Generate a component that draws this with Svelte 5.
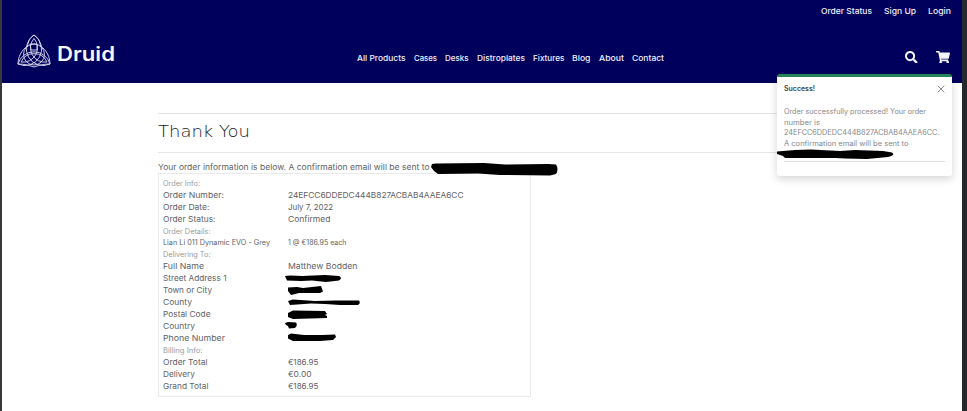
<script>
  const account = [['Order Status', 51], ['Sign Up', 32], ['Login', 23]];
  const links = [
    ['All Products', 48.5], ['Cases', 23], ['Desks', 23.5], ['Distroplates', 48],
    ['Fixtures', 31.5], ['Blog', 18.5], ['About', 25], ['Contact', 32]
  ];
  const rows = [
    { head: 'Order Info:', w: 37, h: 11 },
    { label: 'Order Number:', w: 61, value: '24EFCC6DDEDC444B827ACBAB4AAEA6CC', vw: 175.5 },
    { label: 'Order Date:', w: 46.5, value: 'July 7, 2022', vw: 45 },
    { label: 'Order Status:', w: 52.5, value: 'Confirmed', vw: 42.5 },
    { head: 'Order Details:', w: 47.5, h: 12 },
    { label: 'Lian Li 011 Dynamic EVO - Grey', w: 107, value: '1 @ €186.95 each', vw: 58.5, small: true },
    { head: 'Delivering To:', w: 47.5, h: 11 },
    { label: 'Full Name', w: 41, value: 'Matthew Bodden', vw: 69.5 },
    { label: 'Street Address 1', w: 63.5 },
    { label: 'Town or City', w: 49 },
    { label: 'County', w: 29 },
    { label: 'Postal Code', w: 47.5 },
    { label: 'Country', w: 32 },
    { label: 'Phone Number', w: 62 },
    { head: 'Billing Info:', w: 39.5, h: 12 },
    { label: 'Order Total', w: 44.5, value: '€186.95', vw: 30.5 },
    { label: 'Delivery', w: 32, value: '€0.00', vw: 23.5 },
    { label: 'Grand Total', w: 45.5, value: '€186.95', vw: 30.5 }
  ];
  const message = [
    ['Order successfully processed! Your order', 142], ['number is', 36],
    ['24EFCC6DDEDC444B827ACBAB4AAEA6CC.', 155.5], ['A confirmation email will be sent to', 124.5]
  ];

  // Widens a label horizontally so that it spans the given width.
  function fit(node, width) {
    const natural = node.getBoundingClientRect().width;
    node.style.width = `${width}px`;
    node.style.transform = `scaleX(${width / natural})`;
  }
</script>

<div class="page">
  <header>
    <div class="account">
      {#each account as [t, w]}<a href="#top"><span use:fit={w}>{t}</span></a>{/each}
    </div>
    <div class="bar">
      <div class="brand">
        <svg class="logo" width="34" height="34" viewBox="0 0 34 34" fill="none" stroke="#d4d4ea" stroke-width=".95">
          <path d="M17 1A16.600 16.600 0 0 1 1 30A16.600 16.600 0 0 1 33 30A16.600 16.600 0 0 1 17 1Z" />
          <path d="M17 1C12.500 4 11 8 10.500 12C4.500 16 1 23 1 30C7 30 11 31 17 33C23 31 27 30 33 30C33 23 29.500 16 23.500 12C23 8 21.500 4 17 1Z" />
          <path d="M17 4.500A14.300 14.300 0 0 1 4 28A14.300 14.300 0 0 1 30 28A14.300 14.300 0 0 1 17 4.500Z" />
          <circle cx="17" cy="20.500" r="10.500" />
          <path d="M13 10H20V16H14Z" />
        </svg>
        <span class="name"><span use:fit={58}>Druid</span></span>
      </div>
      <nav>
        {#each links as [t, w]}<a href="#top"><span use:fit={w}>{t}</span></a>{/each}
      </nav>
      <div class="tools">
        <svg width="12.5" height="12.5" viewBox="0 0 512 512" fill="#f4f5fb"><path d="M505 442.700L405.300 343c-4.500-4.500-10.600-7-17-7H372c27.600-35.300 44-79.700 44-128C416 93.100 322.900 0 208 0S0 93.100 0 208s93.100 208 208 208c48.300 0 92.700-16.400 128-44v16.300c0 6.400 2.500 12.500 7 17l99.700 99.700c9.400 9.400 24.600 9.400 33.900 0l28.300-28.300c9.400-9.400 9.400-24.600.1-34zM208 336c-70.700 0-128-57.200-128-128 0-70.700 57.200-128 128-128 70.700 0 128 57.200 128 128 0 70.700-57.200 128-128 128z" /></svg>
        <svg width="14" height="12.500" viewBox="0 0 576 512" fill="#f4f5fb"><path d="M528.100 301.300l47.300-208C578.800 78.300 567.400 64 552 64H159.200l-9.200-44.800C147.800 8 137.900 0 126.500 0H24C10.700 0 0 10.700 0 24v16c0 13.300 10.700 24 24 24h69.900l70.200 343.400C147.300 417.100 136 435.200 136 456c0 30.900 25.100 56 56 56s56-25.100 56-56c0-15.700-6.400-29.800-16.800-40h209.600C430.400 426.200 424 440.300 424 456c0 30.900 25.100 56 56 56s56-25.100 56-56c0-22.200-12.900-41.300-31.600-50.400l5.500-24.300c3.400-15-8-29.300-23.400-29.300H218.100l-6.500-32h293.100c11.200 0 20.900-7.800 23.400-18.700z" /></svg>
      </div>
    </div>
  </header>

  <main>
    <h1><span use:fit={92}>Thank You</span></h1>
    <p class="intro"><span use:fit={271.500}>Your order information is below. A confirmation email will be sent to</span></p>
    <section class="order">
      {#each rows as r}
        {#if r.head}
          <div class="head" class:tall={r.h === 12}><span use:fit={r.w}>{r.head}</span></div>
        {:else}
          <div class="row" class:small={r.small}>
            <div><span use:fit={r.w}>{r.label}</span></div>
            {#if r.value}<div><span use:fit={r.vw}>{r.value}</span></div>{/if}
          </div>
        {/if}
      {/each}
    </section>
  </main>

  <aside class="toast">
    <div class="title">
      <strong><span use:fit={31}>Success!</span></strong>
      <svg width="8" height="8" viewBox="0 0 8 8" stroke="#888" stroke-width="1"><path d="M.7.7L7.300 7.300M7.300.7L.7 7.300" /></svg>
    </div>
    <div class="body">
      {#each message as [t, w]}<div><span use:fit={w}>{t}</span></div>{/each}
    </div>
  </aside>

  <svg class="ink" width="967" height="411" viewBox="0 0 967 411">
    <path d="M432 164L436 163.500L484 163L505 164.500L548 164L556 164.500Q559 169 556 174L550 175.500L500 175L478 173.500L438 174L434 171L431 167Z" />
    <path d="M777 151.500L795 150L811 149.500L840 151L855 150L883 151L892 152.500Q896 155 888 157L867 159L845 158.500L836 158L785 158L783 156L777 154Z" />
    <path d="M285 276L290 275.500L302 276L325 275L339 276Q343 278 339 280.500L326 282L312 280.500L301 281L287 280.500Z" />
    <path d="M288 287.500L297 287L303 288L321 286L323 291.500L320 293L299 293L291 295L288 291Z" />
    <path d="M288 301L293 299.500L315 301L336 300.500L359 300.500Q361 303 358 305L340 305L325 304L311 303.500L290 305Z" />
    <path d="M288 313L293 310.500L325 311L327 314L325 315L327 316V318L293 319L288 317Z" />
    <path d="M285 323L288 322L296 322.500Q298 325 295 328L289 328.500L288 326L286 325Z" />
    <path d="M288 335L291 333.500L304 335L322 335L335 334.500L336 337L333 340L320 341L293 341L288 338.500Z" />
  </svg>
</div>

<style>
  .page { position: relative; box-sizing: border-box; width: 967px; height: 411px; overflow: hidden; background: #fff; border-left: 2px solid #39393b; border-right: 5px solid #25282c; font-family: Inter, "Open Sans", sans-serif; font-size: 8px; color: #606266; }
  span { white-space: nowrap; display: inline-block; transform-origin: 0 50%; }
  a { color: #f1f1fa; text-decoration: none; font-weight: 500; }
  header { height: 83px; background: #00005c; }
  .account { height: 22px; display: flex; justify-content: flex-end; align-items: center; gap: 12px; padding-right: 11.500px; }
  .bar { height: 61px; display: grid; grid-template-columns: 355px 1fr 60px; }
  .brand { display: flex; padding: 11.500px 0 0 15px; gap: 6px; }
  .name { color: #f5f5fa; font: 600 19.500px/40px Inter, sans-serif; }
  nav { display: flex; gap: 8.200px; padding-top: 30px; line-height: 12px; }
  .tools { display: flex; justify-content: space-between; padding: 28.500px 12px 0 3px; }
  main { margin: 30px 156px 0; }
  h1 { margin: 0; height: 38px; border-top: 1px solid #e4e5e6; border-bottom: 1px solid #e4e5e6; font: 200 16.500px/35px "DejaVu Sans", sans-serif; color: #17191d; }
  .intro { margin: 8px 0 0; height: 12px; line-height: 12px; }
  .order { box-sizing: border-box; width: 373px; height: 224px; border: 1px solid #e9eaeb; padding: 4px 4px 0; }
  .head { height: 11px; line-height: 12px; font-size: 7px; color: #999ba0; }
  .head.tall { height: 12px; line-height: 13px; }
  .row { height: 12px; line-height: 12px; display: grid; grid-template-columns: 125px 1fr; }
  .row.small { font-size: 7px; }
  .toast { position: absolute; box-sizing: border-box; left: 775px; top: 74px; width: 174.500px; height: 102px; background: #fff; border-top: 3px solid #25845a; border-radius: 3px; box-shadow: 0 3px 8px #0000002b; padding: 0 6.500px; font-size: 7px; }
  .title { display: flex; justify-content: space-between; align-items: center; height: 23px; color: #41464b; }
  .title strong { font-weight: 600; }
  .body { height: 54px; padding-top: 7px; border-bottom: 1px solid #dedfe0; line-height: 10.700px; color: #85878a; }
  .ink { position: absolute; left: -2px; top: 0; }
</style>
